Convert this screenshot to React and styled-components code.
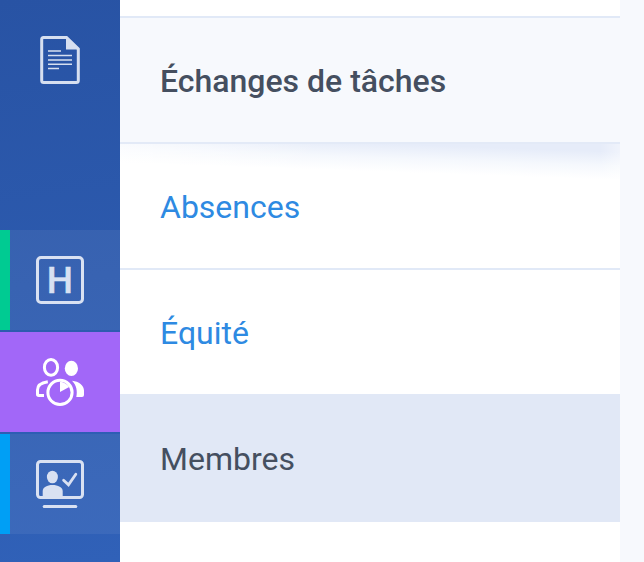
import React from 'react'
import styled, { createGlobalStyle } from 'styled-components';

function DocumentIcon() {
	return (
		<Icon viewBox="0 0 48 48">
			<path d="M7.5 1.5H30.5L42.3 13V44.5Q42.3 46.5 40.3 46.5H7.7Q5.7 46.5 5.7 44.5V3.5Q5.7 1.5 7.5 1.5Z" fill="none" stroke="currentColor" strokeWidth="3" />
			<path d="M30 0.5L43.5 13.4H30Z" fill="currentColor" />
			<path d="M12 15H25M12 19.6H36M12 23.9H36M12 28.2H36M12 32.5H23" stroke="currentColor" strokeWidth="1.5" />
		</Icon>
	)
}

function MembersIcon() {
	return (
		<Icon viewBox="0 0 48 48">
			<ellipse cx="15" cy="9.4" rx="6.6" ry="7.9" fill="none" stroke="currentColor" strokeWidth="3" />
			<ellipse cx="35.4" cy="10.4" rx="6.6" ry="7.6" fill="currentColor" />
			<path d="M11.8 23.8C6.5 24.6 1.5 27 1.5 32V36.3Q1.5 37.5 2.8 37.5H8" fill="none" stroke="currentColor" strokeWidth="3" />
			<path d="M36 22.7C43 23.3 48 27.5 48 32.5V37Q48 39 46 39H40.3C41.6 33 40.5 27 36 22.7Z" fill="currentColor" />
			<circle cx="24" cy="34.4" r="12.1" fill="none" stroke="currentColor" strokeWidth="3" />
			<path d="M24 33.9V23.8Q30.2 24.4 33.2 29.1Z" fill="currentColor" />
		</Icon>
	)
}

function ScreenIcon() {
	return (
		<Icon viewBox="0 0 48 48">
			<rect x="1.5" y="1.5" width="45" height="36" rx="3" fill="none" stroke="currentColor" strokeWidth="3" />
			<ellipse cx="16.4" cy="17" rx="5.5" ry="6.3" fill="currentColor" />
			<path d="M6.7 37.5V31C6.7 27.5 11 25 16.5 25S26.7 27.5 26.7 31V37.5Z" fill="currentColor" />
			<path d="M27.6 20.2L32.5 24.8L39.8 14.2" fill="none" stroke="currentColor" strokeWidth="2.8" strokeLinecap="round" />
			<path d="M8.2 46.5H39.8" stroke="currentColor" strokeWidth="3" strokeLinecap="round" />
		</Icon>
	)
}

const menu = [
	{ text: "Absences", shadow: true },
	{ text: "Équité" },
	{ text: "Membres", active: true }
]

function App() {
	return (
		<Page>
			<GlobalStyle />
			<Sidebar>
				<SidebarTop><DocumentIcon /></SidebarTop>
				<SidebarItem $accent="#00cb92"><LetterBox><Letter>H</Letter></LetterBox></SidebarItem>
				<SidebarItem $selected><MembersIcon /></SidebarItem>
				<SidebarItem $accent="#009ff5"><ScreenIcon /></SidebarItem>
			</Sidebar>
			<Menu>
				<Title>Échanges de tâches</Title>
				{
					menu.map( item => (
						<MenuItem key={item.text} $active={item.active} $shadow={item.shadow}>
							{item.text}
						</MenuItem>
					))
				}
			</Menu>
		</Page>
	)
}

export default App;

const GlobalStyle = createGlobalStyle`
	body {
		margin: 0;
		background-color: #f7f9fd;
		font-family: Roboto, sans-serif;
	}
	* {
		box-sizing: border-box;
	}
`;

const Page = styled.div`
	display: flex;
	height: 562px;
	overflow: hidden;
`;

const Sidebar = styled.nav`
	width: 120px;
	display: flex;
	flex-direction: column;
	gap: 2px;
	background: linear-gradient(172deg, #2853a4, #3061b8);
	color: #d6dff0;
`;

const SidebarTop = styled.div`
	height: 228px;
	padding-top: 36px;
	display: flex;
	justify-content: center;
`;

const SidebarItem = styled.div`
	height: 100px;
	display: flex;
	align-items: center;
	justify-content: center;
	color: ${props => props.$selected ? '#fff' : '#d9e1f2'};
	background-color: ${props => props.$selected ? '#a267f8' : 'rgba(255, 255, 255, 0.06)'};
	box-shadow: ${props => props.$accent ? `inset 10px 0 ${props.$accent}` : 'none'};
`;

const Icon = styled.svg`
	width: 48px;
	height: 48px;
	display: block;
`;

const LetterBox = styled.div`
	width: 48px;
	height: 48px;
	display: flex;
	align-items: center;
	justify-content: center;
	border: 3px solid currentColor;
	border-radius: 5px;
`;

const Letter = styled.span`
	padding-top: 1px;
	font-size: 37px;
	line-height: 42px;
	font-weight: 500;
	-webkit-text-stroke: 0.4px currentColor;
`;

const Menu = styled.main`
	width: 500px;
	padding-top: 16px;
	background-color: #fff;
`;

const Title = styled.h1`
	height: 128px;
	margin: 0;
	padding: 0 40px;
	border-top: 2px solid #e1e9f7;
	border-bottom: 2px solid #e3eaf7;
	background-color: #f7f9fd;
	color: #454f60;
	font-size: 32px;
	line-height: 126px;
	font-weight: 500;
`;

const MenuItem = styled.div`
	height: ${props => props.$active ? '128px' : props.$shadow ? '126px' : '124px'};
	padding: ${props => props.$active ? '2px 40px 0' : '0 40px'};
	border-bottom: ${props => props.$shadow ? '2px solid #e1e9f7' : 'none'};
	background-color: ${props => props.$active ? '#e1e8f6' : '#fff'};
	background-image: ${props => props.$shadow
		? 'linear-gradient(to right, rgba(255, 255, 255, 0.6), rgba(255, 255, 255, 0) 40%, rgba(255, 255, 255, 0) 96%, rgba(255, 255, 255, 0.4)), linear-gradient(182deg, #e6ecf9 8px, #f5f8fd 22px, #fff 36px)'
		: 'none'};
	color: ${props => props.$active ? '#454f60' : '#2e8ae2'};
	font-size: 32px;
	line-height: 126px;
`;
